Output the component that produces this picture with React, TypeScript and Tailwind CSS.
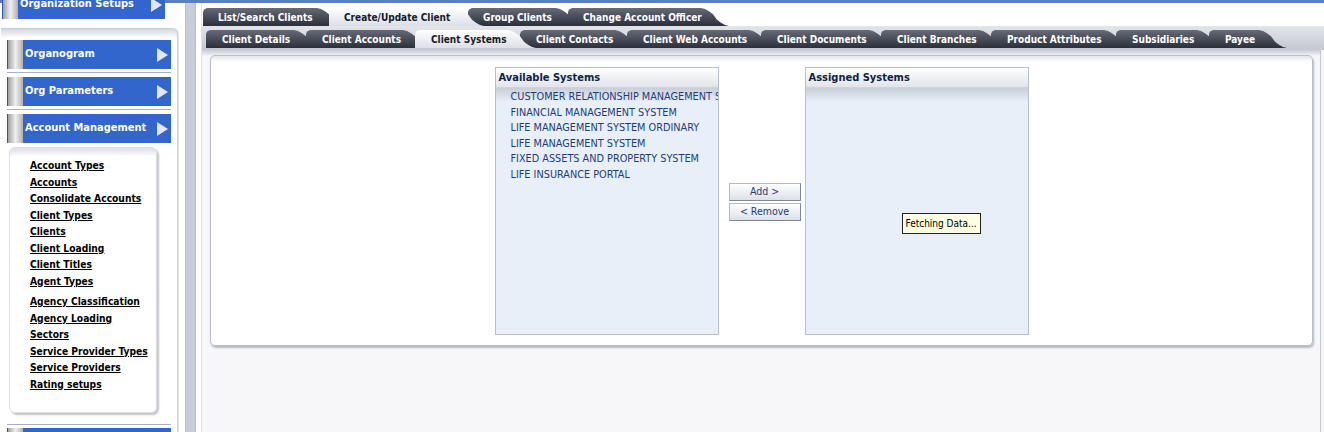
import React from 'react';

const FONT = "font-['DejaVu_Sans_Condensed','Liberation_Sans',sans-serif]";

// right edge of every tab is an S-shaped slope, left top corner rounded
const TAB_CLIP =
  '[clip-path:polygon(0_4px,1px_1.5px,4px_0,calc(100%_-_28px)_0,calc(100%_-_24px)_1px,calc(100%_-_20px)_3.3px,calc(100%_-_16px)_6.3px,calc(100%_-_14px)_9px,calc(100%_-_12px)_11.7px,calc(100%_-_8px)_14.7px,calc(100%_-_4px)_17px,100%_100%,0_100%)]';

const Z = ['z-[20]', 'z-[19]', 'z-[18]', 'z-[17]', 'z-[16]', 'z-[15]', 'z-[14]', 'z-[13]', 'z-[12]', 'z-[11]'];

type Tab = { label: string; w: string; active?: boolean };

const topTabs: Tab[] = [
  { label: 'List/Search Clients', w: 'w-[142px]' },
  { label: 'Create/Update Client', w: 'w-[155px]', active: true },
  { label: 'Group Clients', w: 'w-[116px]' },
  { label: 'Change Account Officer', w: 'w-[161px]' },
];

const subTabs: Tab[] = [
  { label: 'Client Details', w: 'w-[116px]' },
  { label: 'Client Accounts', w: 'w-[125px]' },
  { label: 'Client Systems', w: 'w-[121px]', active: true },
  { label: 'Client Contacts', w: 'w-[123px]' },
  { label: 'Client Web Accounts', w: 'w-[150px]' },
  { label: 'Client Documents', w: 'w-[136px]' },
  { label: 'Client Branches', w: 'w-[126px]' },
  { label: 'Product Attributes', w: 'w-[141px]' },
  { label: 'Subsidiaries', w: 'w-[109px]' },
  { label: 'Payee', w: 'w-[78px]' },
];

const linksA = ['Account Types', 'Accounts', 'Consolidate Accounts', 'Client Types', 'Clients', 'Client Loading', 'Client Titles', 'Agent Types'];
const linksB = ['Agency Classification', 'Agency Loading', 'Sectors', 'Service Provider Types', 'Service Providers', 'Rating setups'];

const systems = [
  'CUSTOMER RELATIONSHIP MANAGEMENT SYSTEM',
  'FINANCIAL MANAGEMENT SYSTEM',
  'LIFE MANAGEMENT SYSTEM ORDINARY',
  'LIFE MANAGEMENT SYSTEM',
  'FIXED ASSETS AND PROPERTY SYSTEM',
  'LIFE INSURANCE PORTAL',
];

function NavButton({ label, className = '' }: { label?: string; className?: string }) {
  return (
    <div className={`flex h-[29px] shrink-0 items-center border-l border-[#2a55b0] bg-[#3366cc] ${className}`}>
      <div className="h-full w-[15px] bg-linear-to-r from-[#9f9f9f] via-[#f0f0f0] to-[#b0b0b0]" />
      <span className="ml-[2px] flex-1 whitespace-nowrap text-[11px] font-bold text-white">{label}</span>
      <svg width="11" height="14" viewBox="0 0 11 14" className="mr-[3px]">
        <polygon points="0,0 11,7 0,14" fill="#e4e7ef" />
      </svg>
    </div>
  );
}

function Separator({ className = '' }: { className?: string }) {
  return <div className={`h-px bg-[#a9b2c4] ${className}`} />;
}

function TabRow({ tabs, pad }: { tabs: Tab[]; pad: string }) {
  return (
    <>
      {tabs.map((t, i) => (
        <div
          key={t.label}
          className={`relative -mr-[16px] flex h-[18px] shrink-0 items-center whitespace-nowrap text-[10px] font-bold ${pad} ${t.w} ${TAB_CLIP} ${
            t.active
              ? 'z-[30] bg-linear-to-b from-white to-[#dcdfe6] text-[#141c2a]'
              : `${Z[i]} bg-linear-to-b from-[#666b77] to-[#2c303b] text-white`
          }`}
        >
          {t.label}
        </div>
      ))}
    </>
  );
}

function ListBox({ title, items, children }: { title: string; items: string[]; children?: React.ReactNode }) {
  return (
    <div className="relative flex h-[268px] w-[224px] shrink-0 flex-col border border-[#b7bfcc] bg-[#e9eff8]">
      <div className="flex h-[20px] shrink-0 items-center border-b border-[#cfd4dc] bg-linear-to-b from-white to-[#e1e4ea] pt-[1px] pl-[3px] text-[11px] font-bold text-[#0d2446]">
        {title}
      </div>
      <div className="flex-1 overflow-hidden bg-[linear-gradient(to_bottom,#c9cfd9,#e9eff8_14px)] pt-[1px] pl-[15px]">
        {items.map((s) => (
          <div key={s} className="whitespace-nowrap text-[10.8px] leading-[15.6px] text-[#1d3d78]">
            {s}
          </div>
        ))}
      </div>
      {children}
    </div>
  );
}

function ShuttleButton({ label }: { label: string }) {
  return (
    <button className="flex h-[18px] w-[72px] items-center justify-center border border-[#b3b9c4] border-r-[#7f8795] border-b-[#7f8795] bg-linear-to-b from-white to-[#dce0e7] text-[10.5px] text-[#1d3d78]">
      {label}
    </button>
  );
}

export default function App() {
  return (
    <div className={`flex h-[432px] w-[1324px] flex-col overflow-hidden bg-white ${FONT}`}>
      <div className="h-[3px] shrink-0 bg-[#5b7ec3]" />
      <div className="flex min-h-0 flex-1">
        {/* left navigation */}
        <div className="flex w-[178px] shrink-0 flex-col pl-[1px]">
          <NavButton label="Organization Setups" className="-mt-[13px] ml-[1px] w-[163px]" />
          <div className="mt-[9px] flex flex-1 flex-col rounded-tr-[6px] border-t border-r border-[#c9cdd6] bg-[linear-gradient(to_bottom,#d3d7df,#ffffff_9px)] pt-[11px] pr-[6px] pl-[6px] shadow-[1px_0_1px_#e2e4e8]">
            <NavButton label="Organogram" />
            <Separator className="mt-[3px] mb-[4px]" />
            <NavButton label="Org Parameters" />
            <Separator className="mt-[3px] mb-[4px]" />
            <NavButton label="Account Management" />
            <div className="mt-[4px] ml-[2px] h-[266px] w-[148px] shrink-0 rounded-[6px] border border-[#dcdfe5] bg-[linear-gradient(to_bottom,#dcdfe6,#ffffff_9px)] pt-[10px] pl-[20px] shadow-[2px_2px_2px_#c4c4c8]">
              {linksA.map((l) => (
                <div key={l} className="text-[10.2px] font-bold leading-[16.5px] text-black underline">
                  {l}
                </div>
              ))}
              <div className="mt-[4px]">
                {linksB.map((l) => (
                  <div key={l} className="text-[10.2px] font-bold leading-[16.5px] text-black underline">
                    {l}
                  </div>
                ))}
              </div>
            </div>
            <Separator className="mt-[11px] mb-[3px]" />
            <NavButton />
          </div>
        </div>

        {/* splitter */}
        <div className="w-[7px] shrink-0" />
        <div className="w-[11px] shrink-0 border-x border-[#b7bfcf] bg-[#c6ccd9]" />
        <div className="w-[5px] shrink-0" />

        {/* main area */}
        <div className="flex min-w-0 flex-1 flex-col border-l border-[#e2e3e8] bg-[#f7f7f9]">
          <div className="flex h-[23px] shrink-0 items-end bg-white pl-[1px]">
            <TabRow tabs={topTabs} pad="pl-[15px]" />
          </div>
          <div className="flex h-[24px] shrink-0 bg-[linear-gradient(to_bottom,#e3e5ea,#c4c8d1)] pt-[4px] pl-[4px]">
            <TabRow tabs={subTabs} pad="pl-[16px]" />
          </div>
          <div className="mr-[3px] flex-1 border-r border-[#c3c6cf] bg-[linear-gradient(to_bottom,#c8ccd5,#eceef1_5px,#f7f7f9_6px)] pt-[5px] pr-[7px] pl-[8px]">
            <div className="flex h-[291px] items-start justify-center rounded-[5px] border border-[#b9bdc8] bg-[linear-gradient(to_bottom,#e2e5ea,#ffffff_6px)] pt-[11px] shadow-[1px_2px_2px_#b6b9c3]">
              <ListBox title="Available Systems" items={systems} />
              <div className="ml-[10px] mr-[4px] flex h-[268px] flex-col items-center justify-center gap-[2px] pt-[2px]">
                <ShuttleButton label="Add >" />
                <ShuttleButton label="< Remove" />
              </div>
              <ListBox title="Assigned Systems" items={[]}>
                <div className="absolute top-[145px] left-[96px] border border-[#222] bg-[#ffffe1] px-[3px] py-[3px] text-[10px] leading-[13px] whitespace-nowrap text-black">
                  Fetching Data...
                </div>
              </ListBox>
            </div>
          </div>
        </div>
      </div>
    </div>
  );
}
